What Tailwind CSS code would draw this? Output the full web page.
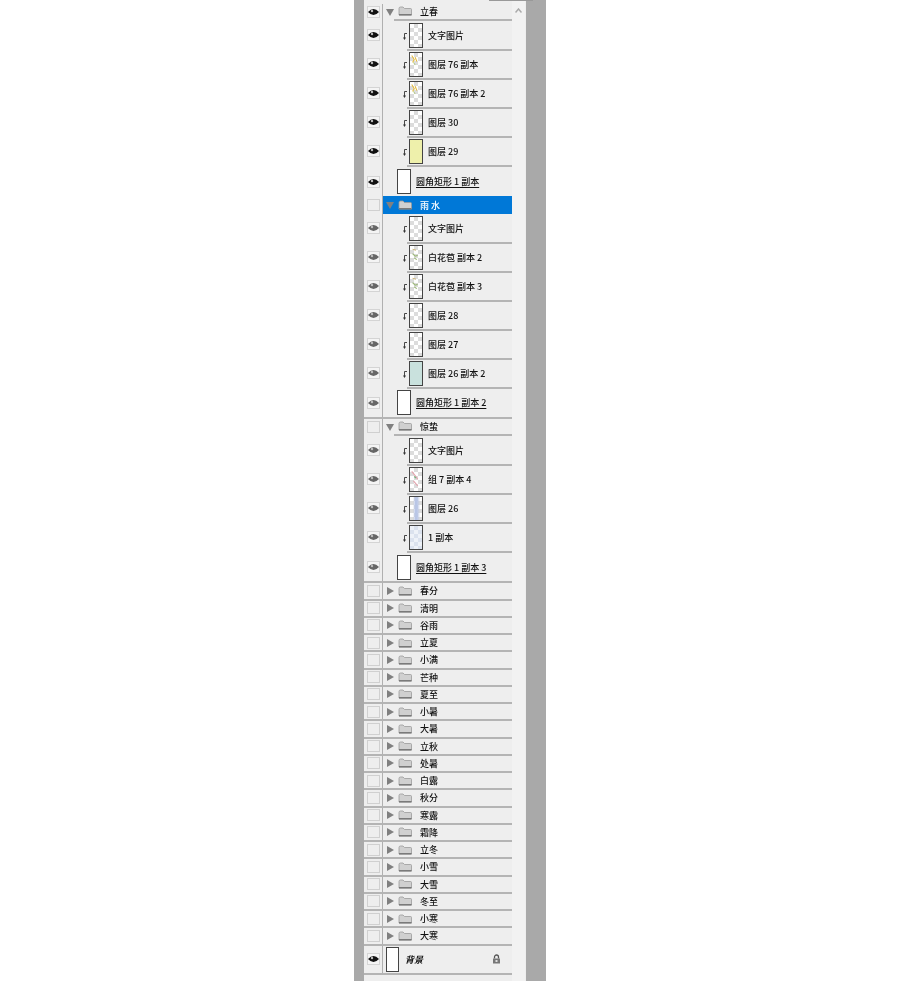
<!DOCTYPE html>
<html lang="zh">
<head>
<meta charset="utf-8">
<script src="https://cdn.jsdelivr.net/npm/@tailwindcss/browser@4"></script>
<title>图层面板</title>
</head>
<body class="bg-white">
<svg class="absolute w-0 h-0">
  <defs>
    <symbol id="eye" viewBox="0 0 11 8"><path d="M0 4Q5.5-2 11 4 5.5 10 0 4Z" fill="currentColor"/><circle cx="4" cy="3" r="1.2" fill="#bbb"/></symbol>
    <symbol id="fold" viewBox="0 0 14 10"><path d="M1 2.5Q1 1 2.5 1H5L6.5 2.5H12.5Q13.5 2.5 13.5 3.5V9H1Z" fill="#d0d0d0" stroke="#9a9a9a" stroke-width="0.8"/><path d="M1 8H13.5V9.5H1Z" fill="#7a7a7a"/></symbol>
    <symbol id="clip" viewBox="0 0 6 9"><path d="M6 1.5H3.5V6" fill="none" stroke="#333" stroke-width="0.9"/><path d="M2 5.5H5L3.5 8Z" fill="#333"/></symbol>
    <symbol id="down" viewBox="0 0 8 8"><path d="M0 1H8L4 8Z" fill="#808080"/></symbol>
    <symbol id="right" viewBox="0 0 7 8"><path d="M0 0L7 4 0 8Z" fill="#808080"/></symbol>
    <symbol id="yel" viewBox="0 0 14 25"><path d="M2 2L5 7 3 10M6 4L8 9" fill="none" stroke="#e3b93a" stroke-width="1.2"/><path d="M4 10L6 13" stroke="#a8c46a"/></symbol>
    <symbol id="grn" viewBox="0 0 14 25"><path d="M3 8L6 11 9 10M5 13L8 15" fill="none" stroke="#9cb878" stroke-width="1.3"/><path d="M3 3L7 4" stroke="#c5a860"/></symbol>
    <symbol id="pnk" viewBox="0 0 14 25"><path d="M2 3L6 8 9 12M4 14L9 20" fill="none" stroke="#e4a3ad" stroke-width="1.3"/><path d="M5 9L7 11" stroke="#6cb47c" stroke-width="1.3"/></symbol>
  </defs>
</svg>
<main class="w-[900px] h-[981px] overflow-hidden">
<div class="ml-[354px] w-[192px] h-[981px] bg-[#a9a9a9] pl-[10px] pr-[20px] blur-[0.4px]">
<div class="relative h-full bg-[#eeeeee] flex text-[9px] leading-none font-medium text-[#111] font-['Noto_Sans_CJK_SC','Noto_Sans',sans-serif]">
<div class="absolute left-[125px] top-0 w-[44px] h-px bg-[#999]"></div>
<div class="w-[148px] pt-[3.6px]">

<div class="flex h-[18.25px]"><div class="w-[19px] pl-px border-r border-[#b0b0b0] flex items-center justify-center pb-px"><span class="w-[13px] h-[12px] bg-[#f4f4f4] border border-[#d4d4d4] flex items-center justify-center text-[#111]"><svg class="w-[11px] h-[8px]"><use href="#eye"/></svg></span></div><div class="flex-1 flex items-start pl-[3px]"><svg class="w-[8px] h-[8px] shrink-0 mt-[4px]"><use href="#down"/></svg><div class="flex-1 h-[17.25px] border-b-2 border-[#b4b4b4] flex items-center pl-[4px]"><svg class="w-[14px] h-[10px]"><use href="#fold"/></svg><span class="ml-[8px]">立春</span></div></div></div>

<div class="flex h-[29.1px]"><div class="w-[19px] pl-px border-r border-[#b0b0b0] flex items-center justify-center pb-[3px]"><span class="w-[13px] h-[12px] bg-[#f4f4f4] border border-[#d4d4d4] flex items-center justify-center text-[#111]"><svg class="w-[11px] h-[8px]"><use href="#eye"/></svg></span></div><div class="flex-1 flex items-center"><svg class="w-[6px] h-[9px] ml-[18px] shrink-0"><use href="#clip"/></svg><div class="flex-1 h-full border-b-2 border-[#b4b4b4] flex items-center pl-[2px]"><div class="w-[14px] h-[25px] border border-[#444] bg-[repeating-conic-gradient(#dcdcdc_0_25%,#ffffff_0_50%)] bg-[length:8px_8px]"></div><span class="ml-[5px]">文字图片</span></div></div></div>
<div class="flex h-[29.1px]"><div class="w-[19px] pl-px border-r border-[#b0b0b0] flex items-center justify-center pb-[3px]"><span class="w-[13px] h-[12px] bg-[#f4f4f4] border border-[#d4d4d4] flex items-center justify-center text-[#111]"><svg class="w-[11px] h-[8px]"><use href="#eye"/></svg></span></div><div class="flex-1 flex items-center"><svg class="w-[6px] h-[9px] ml-[18px] shrink-0"><use href="#clip"/></svg><div class="flex-1 h-full border-b-2 border-[#b4b4b4] flex items-center pl-[2px]"><div class="w-[14px] h-[25px] border border-[#444] bg-[repeating-conic-gradient(#dcdcdc_0_25%,#ffffff_0_50%)] bg-[length:8px_8px]"><svg class="w-full h-full"><use href="#yel"/></svg></div><span class="ml-[5px]">图层 76 副本</span></div></div></div>
<div class="flex h-[29.1px]"><div class="w-[19px] pl-px border-r border-[#b0b0b0] flex items-center justify-center pb-[3px]"><span class="w-[13px] h-[12px] bg-[#f4f4f4] border border-[#d4d4d4] flex items-center justify-center text-[#111]"><svg class="w-[11px] h-[8px]"><use href="#eye"/></svg></span></div><div class="flex-1 flex items-center"><svg class="w-[6px] h-[9px] ml-[18px] shrink-0"><use href="#clip"/></svg><div class="flex-1 h-full border-b-2 border-[#b4b4b4] flex items-center pl-[2px]"><div class="w-[14px] h-[25px] border border-[#444] bg-[repeating-conic-gradient(#dcdcdc_0_25%,#ffffff_0_50%)] bg-[length:8px_8px]"><svg class="w-full h-full"><use href="#yel"/></svg></div><span class="ml-[5px]">图层 76 副本 2</span></div></div></div>
<div class="flex h-[29.1px]"><div class="w-[19px] pl-px border-r border-[#b0b0b0] flex items-center justify-center pb-[3px]"><span class="w-[13px] h-[12px] bg-[#f4f4f4] border border-[#d4d4d4] flex items-center justify-center text-[#111]"><svg class="w-[11px] h-[8px]"><use href="#eye"/></svg></span></div><div class="flex-1 flex items-center"><svg class="w-[6px] h-[9px] ml-[18px] shrink-0"><use href="#clip"/></svg><div class="flex-1 h-full border-b-2 border-[#b4b4b4] flex items-center pl-[2px]"><div class="w-[14px] h-[25px] border border-[#444] bg-[repeating-conic-gradient(#dcdcdc_0_25%,#ffffff_0_50%)] bg-[length:8px_8px]"></div><span class="ml-[5px]">图层 30</span></div></div></div>
<div class="flex h-[29.1px]"><div class="w-[19px] pl-px border-r border-[#b0b0b0] flex items-center justify-center pb-[3px]"><span class="w-[13px] h-[12px] bg-[#f4f4f4] border border-[#d4d4d4] flex items-center justify-center text-[#111]"><svg class="w-[11px] h-[8px]"><use href="#eye"/></svg></span></div><div class="flex-1 flex items-center"><svg class="w-[6px] h-[9px] ml-[18px] shrink-0"><use href="#clip"/></svg><div class="flex-1 h-full border-b-2 border-[#b4b4b4] flex items-center pl-[2px]"><div class="w-[14px] h-[25px] border border-[#444] bg-[#eef0ab]"></div><span class="ml-[5px]">图层 29</span></div></div></div>
<div class="flex h-[29.1px]"><div class="w-[19px] pl-px border-r border-[#b0b0b0] flex items-center justify-center"><span class="w-[13px] h-[12px] bg-[#f4f4f4] border border-[#d4d4d4] flex items-center justify-center text-[#111]"><svg class="w-[11px] h-[8px]"><use href="#eye"/></svg></span></div><div class="flex-1 flex items-center pl-[14px]"><div class="w-[14px] h-[25px] border border-[#444] bg-white"></div><span class="ml-[5px] underline underline-offset-2">圆角矩形 1 副本</span></div></div>

<div class="flex h-[18.25px]"><div class="w-[19px] pl-px border-r border-[#b0b0b0] flex items-center justify-center pb-px"><span class="w-[13px] h-[12px] bg-[#eeeeee] border border-[#d0d0d0]"></span></div><div class="flex-1 h-[17.25px] flex items-center pl-[3px] bg-[#0078d7] text-white"><svg class="w-[8px] h-[8px] shrink-0"><use href="#down"/></svg><div class="flex-1 h-full flex items-center pl-[4px]"><svg class="w-[14px] h-[10px]"><use href="#fold"/></svg><span class="ml-[8px]">雨 水</span></div></div></div>

<div class="flex h-[29.1px]"><div class="w-[19px] pl-px border-r border-[#b0b0b0] flex items-center justify-center pb-[3px]"><span class="w-[13px] h-[12px] bg-[#f4f4f4] border border-[#d4d4d4] flex items-center justify-center text-[#666]"><svg class="w-[11px] h-[8px]"><use href="#eye"/></svg></span></div><div class="flex-1 flex items-center"><svg class="w-[6px] h-[9px] ml-[18px] shrink-0"><use href="#clip"/></svg><div class="flex-1 h-full border-b-2 border-[#b4b4b4] flex items-center pl-[2px]"><div class="w-[14px] h-[25px] border border-[#444] bg-[repeating-conic-gradient(#dcdcdc_0_25%,#ffffff_0_50%)] bg-[length:8px_8px]"></div><span class="ml-[5px]">文字图片</span></div></div></div>
<div class="flex h-[29.1px]"><div class="w-[19px] pl-px border-r border-[#b0b0b0] flex items-center justify-center pb-[3px]"><span class="w-[13px] h-[12px] bg-[#f4f4f4] border border-[#d4d4d4] flex items-center justify-center text-[#666]"><svg class="w-[11px] h-[8px]"><use href="#eye"/></svg></span></div><div class="flex-1 flex items-center"><svg class="w-[6px] h-[9px] ml-[18px] shrink-0"><use href="#clip"/></svg><div class="flex-1 h-full border-b-2 border-[#b4b4b4] flex items-center pl-[2px]"><div class="w-[14px] h-[25px] border border-[#444] bg-[repeating-conic-gradient(#dcdcdc_0_25%,#ffffff_0_50%)] bg-[length:8px_8px]"><svg class="w-full h-full"><use href="#grn"/></svg></div><span class="ml-[5px]">白花苞 副本 2</span></div></div></div>
<div class="flex h-[29.1px]"><div class="w-[19px] pl-px border-r border-[#b0b0b0] flex items-center justify-center pb-[3px]"><span class="w-[13px] h-[12px] bg-[#f4f4f4] border border-[#d4d4d4] flex items-center justify-center text-[#666]"><svg class="w-[11px] h-[8px]"><use href="#eye"/></svg></span></div><div class="flex-1 flex items-center"><svg class="w-[6px] h-[9px] ml-[18px] shrink-0"><use href="#clip"/></svg><div class="flex-1 h-full border-b-2 border-[#b4b4b4] flex items-center pl-[2px]"><div class="w-[14px] h-[25px] border border-[#444] bg-[repeating-conic-gradient(#dcdcdc_0_25%,#ffffff_0_50%)] bg-[length:8px_8px]"><svg class="w-full h-full"><use href="#grn"/></svg></div><span class="ml-[5px]">白花苞 副本 3</span></div></div></div>
<div class="flex h-[29.1px]"><div class="w-[19px] pl-px border-r border-[#b0b0b0] flex items-center justify-center pb-[3px]"><span class="w-[13px] h-[12px] bg-[#f4f4f4] border border-[#d4d4d4] flex items-center justify-center text-[#666]"><svg class="w-[11px] h-[8px]"><use href="#eye"/></svg></span></div><div class="flex-1 flex items-center"><svg class="w-[6px] h-[9px] ml-[18px] shrink-0"><use href="#clip"/></svg><div class="flex-1 h-full border-b-2 border-[#b4b4b4] flex items-center pl-[2px]"><div class="w-[14px] h-[25px] border border-[#444] bg-[repeating-conic-gradient(#dcdcdc_0_25%,#ffffff_0_50%)] bg-[length:8px_8px]"></div><span class="ml-[5px]">图层 28</span></div></div></div>
<div class="flex h-[29.1px]"><div class="w-[19px] pl-px border-r border-[#b0b0b0] flex items-center justify-center pb-[3px]"><span class="w-[13px] h-[12px] bg-[#f4f4f4] border border-[#d4d4d4] flex items-center justify-center text-[#666]"><svg class="w-[11px] h-[8px]"><use href="#eye"/></svg></span></div><div class="flex-1 flex items-center"><svg class="w-[6px] h-[9px] ml-[18px] shrink-0"><use href="#clip"/></svg><div class="flex-1 h-full border-b-2 border-[#b4b4b4] flex items-center pl-[2px]"><div class="w-[14px] h-[25px] border border-[#444] bg-[repeating-conic-gradient(#dcdcdc_0_25%,#ffffff_0_50%)] bg-[length:8px_8px]"></div><span class="ml-[5px]">图层 27</span></div></div></div>
<div class="flex h-[29.1px]"><div class="w-[19px] pl-px border-r border-[#b0b0b0] flex items-center justify-center pb-[3px]"><span class="w-[13px] h-[12px] bg-[#f4f4f4] border border-[#d4d4d4] flex items-center justify-center text-[#666]"><svg class="w-[11px] h-[8px]"><use href="#eye"/></svg></span></div><div class="flex-1 flex items-center"><svg class="w-[6px] h-[9px] ml-[18px] shrink-0"><use href="#clip"/></svg><div class="flex-1 h-full border-b-2 border-[#b4b4b4] flex items-center pl-[2px]"><div class="w-[14px] h-[25px] border border-[#444] bg-[#c9e1dd]"></div><span class="ml-[5px]">图层 26 副本 2</span></div></div></div>
<div class="flex h-[29.5px] border-b-2 border-[#b4b4b4]"><div class="w-[19px] pl-px border-r border-[#b0b0b0] flex items-center justify-center"><span class="w-[13px] h-[12px] bg-[#f4f4f4] border border-[#d4d4d4] flex items-center justify-center text-[#666]"><svg class="w-[11px] h-[8px]"><use href="#eye"/></svg></span></div><div class="flex-1 flex items-center pl-[14px]"><div class="w-[14px] h-[25px] border border-[#444] bg-white"></div><span class="ml-[5px] underline underline-offset-2">圆角矩形 1 副本 2</span></div></div>

<div class="flex h-[18.25px]"><div class="w-[19px] pl-px border-r border-[#b0b0b0] flex items-center justify-center pb-px"><span class="w-[13px] h-[12px] bg-[#eeeeee] border border-[#d0d0d0]"></span></div><div class="flex-1 flex items-start pl-[3px]"><svg class="w-[8px] h-[8px] shrink-0 mt-[4px]"><use href="#down"/></svg><div class="flex-1 h-[17.25px] border-b-2 border-[#b4b4b4] flex items-center pl-[4px]"><svg class="w-[14px] h-[10px]"><use href="#fold"/></svg><span class="ml-[8px]">惊蛰</span></div></div></div>

<div class="flex h-[29.1px]"><div class="w-[19px] pl-px border-r border-[#b0b0b0] flex items-center justify-center pb-[3px]"><span class="w-[13px] h-[12px] bg-[#f4f4f4] border border-[#d4d4d4] flex items-center justify-center text-[#666]"><svg class="w-[11px] h-[8px]"><use href="#eye"/></svg></span></div><div class="flex-1 flex items-center"><svg class="w-[6px] h-[9px] ml-[18px] shrink-0"><use href="#clip"/></svg><div class="flex-1 h-full border-b-2 border-[#b4b4b4] flex items-center pl-[2px]"><div class="w-[14px] h-[25px] border border-[#444] bg-[repeating-conic-gradient(#dcdcdc_0_25%,#ffffff_0_50%)] bg-[length:8px_8px]"></div><span class="ml-[5px]">文字图片</span></div></div></div>
<div class="flex h-[29.1px]"><div class="w-[19px] pl-px border-r border-[#b0b0b0] flex items-center justify-center pb-[3px]"><span class="w-[13px] h-[12px] bg-[#f4f4f4] border border-[#d4d4d4] flex items-center justify-center text-[#666]"><svg class="w-[11px] h-[8px]"><use href="#eye"/></svg></span></div><div class="flex-1 flex items-center"><svg class="w-[6px] h-[9px] ml-[18px] shrink-0"><use href="#clip"/></svg><div class="flex-1 h-full border-b-2 border-[#b4b4b4] flex items-center pl-[2px]"><div class="w-[14px] h-[25px] border border-[#444] bg-[repeating-conic-gradient(#dcdcdc_0_25%,#ffffff_0_50%)] bg-[length:8px_8px]"><svg class="w-full h-full"><use href="#pnk"/></svg></div><span class="ml-[5px]">组 7 副本 4</span></div></div></div>
<div class="flex h-[29.1px]"><div class="w-[19px] pl-px border-r border-[#b0b0b0] flex items-center justify-center pb-[3px]"><span class="w-[13px] h-[12px] bg-[#f4f4f4] border border-[#d4d4d4] flex items-center justify-center text-[#666]"><svg class="w-[11px] h-[8px]"><use href="#eye"/></svg></span></div><div class="flex-1 flex items-center"><svg class="w-[6px] h-[9px] ml-[18px] shrink-0"><use href="#clip"/></svg><div class="flex-1 h-full border-b-2 border-[#b4b4b4] flex items-center pl-[2px]"><div class="w-[14px] h-[25px] border border-[#444] bg-[linear-gradient(90deg,#ffffff00_25%,#b9c6e6_45%,#b9c6e6_60%,#ffffff00_85%),repeating-conic-gradient(#dcdcdc_0_25%,#ffffff_0_50%)] bg-[length:100%_100%,8px_8px]"></div><span class="ml-[5px]">图层 26</span></div></div></div>
<div class="flex h-[29.1px]"><div class="w-[19px] pl-px border-r border-[#b0b0b0] flex items-center justify-center pb-[3px]"><span class="w-[13px] h-[12px] bg-[#f4f4f4] border border-[#d4d4d4] flex items-center justify-center text-[#666]"><svg class="w-[11px] h-[8px]"><use href="#eye"/></svg></span></div><div class="flex-1 flex items-center"><svg class="w-[6px] h-[9px] ml-[18px] shrink-0"><use href="#clip"/></svg><div class="flex-1 h-full border-b-2 border-[#b4b4b4] flex items-center pl-[2px]"><div class="w-[14px] h-[25px] border border-[#444] bg-[repeating-conic-gradient(#dbe2ee_0_25%,#eef2f8_0_50%)] bg-[length:8px_8px]"></div><span class="ml-[5px]">1 副本</span></div></div></div>
<div class="flex h-[30px] border-b-2 border-[#b4b4b4]"><div class="w-[19px] pl-px border-r border-[#b0b0b0] flex items-center justify-center"><span class="w-[13px] h-[12px] bg-[#f4f4f4] border border-[#d4d4d4] flex items-center justify-center text-[#666]"><svg class="w-[11px] h-[8px]"><use href="#eye"/></svg></span></div><div class="flex-1 flex items-center pl-[14px]"><div class="w-[14px] h-[25px] border border-[#444] bg-white"></div><span class="ml-[5px] underline underline-offset-2">圆角矩形 1 副本 3</span></div></div>

<div class="flex h-[17.25px] border-b-2 border-[#b4b4b4]"><div class="w-[19px] pl-px border-r border-[#b0b0b0] flex items-center justify-center"><span class="w-[13px] h-[12px] bg-[#eeeeee] border border-[#d0d0d0]"></span></div><div class="flex-1 flex items-center pl-[4px]"><svg class="w-[7px] h-[8px] shrink-0"><use href="#right"/></svg><svg class="w-[14px] h-[10px] ml-[4px]"><use href="#fold"/></svg><span class="ml-[8px]">春分</span></div></div>
<div class="flex h-[17.25px] border-b-2 border-[#b4b4b4]"><div class="w-[19px] pl-px border-r border-[#b0b0b0] flex items-center justify-center"><span class="w-[13px] h-[12px] bg-[#eeeeee] border border-[#d0d0d0]"></span></div><div class="flex-1 flex items-center pl-[4px]"><svg class="w-[7px] h-[8px] shrink-0"><use href="#right"/></svg><svg class="w-[14px] h-[10px] ml-[4px]"><use href="#fold"/></svg><span class="ml-[8px]">清明</span></div></div>
<div class="flex h-[17.25px] border-b-2 border-[#b4b4b4]"><div class="w-[19px] pl-px border-r border-[#b0b0b0] flex items-center justify-center"><span class="w-[13px] h-[12px] bg-[#eeeeee] border border-[#d0d0d0]"></span></div><div class="flex-1 flex items-center pl-[4px]"><svg class="w-[7px] h-[8px] shrink-0"><use href="#right"/></svg><svg class="w-[14px] h-[10px] ml-[4px]"><use href="#fold"/></svg><span class="ml-[8px]">谷雨</span></div></div>
<div class="flex h-[17.25px] border-b-2 border-[#b4b4b4]"><div class="w-[19px] pl-px border-r border-[#b0b0b0] flex items-center justify-center"><span class="w-[13px] h-[12px] bg-[#eeeeee] border border-[#d0d0d0]"></span></div><div class="flex-1 flex items-center pl-[4px]"><svg class="w-[7px] h-[8px] shrink-0"><use href="#right"/></svg><svg class="w-[14px] h-[10px] ml-[4px]"><use href="#fold"/></svg><span class="ml-[8px]">立夏</span></div></div>
<div class="flex h-[17.25px] border-b-2 border-[#b4b4b4]"><div class="w-[19px] pl-px border-r border-[#b0b0b0] flex items-center justify-center"><span class="w-[13px] h-[12px] bg-[#eeeeee] border border-[#d0d0d0]"></span></div><div class="flex-1 flex items-center pl-[4px]"><svg class="w-[7px] h-[8px] shrink-0"><use href="#right"/></svg><svg class="w-[14px] h-[10px] ml-[4px]"><use href="#fold"/></svg><span class="ml-[8px]">小满</span></div></div>
<div class="flex h-[17.25px] border-b-2 border-[#b4b4b4]"><div class="w-[19px] pl-px border-r border-[#b0b0b0] flex items-center justify-center"><span class="w-[13px] h-[12px] bg-[#eeeeee] border border-[#d0d0d0]"></span></div><div class="flex-1 flex items-center pl-[4px]"><svg class="w-[7px] h-[8px] shrink-0"><use href="#right"/></svg><svg class="w-[14px] h-[10px] ml-[4px]"><use href="#fold"/></svg><span class="ml-[8px]">芒种</span></div></div>
<div class="flex h-[17.25px] border-b-2 border-[#b4b4b4]"><div class="w-[19px] pl-px border-r border-[#b0b0b0] flex items-center justify-center"><span class="w-[13px] h-[12px] bg-[#eeeeee] border border-[#d0d0d0]"></span></div><div class="flex-1 flex items-center pl-[4px]"><svg class="w-[7px] h-[8px] shrink-0"><use href="#right"/></svg><svg class="w-[14px] h-[10px] ml-[4px]"><use href="#fold"/></svg><span class="ml-[8px]">夏至</span></div></div>
<div class="flex h-[17.25px] border-b-2 border-[#b4b4b4]"><div class="w-[19px] pl-px border-r border-[#b0b0b0] flex items-center justify-center"><span class="w-[13px] h-[12px] bg-[#eeeeee] border border-[#d0d0d0]"></span></div><div class="flex-1 flex items-center pl-[4px]"><svg class="w-[7px] h-[8px] shrink-0"><use href="#right"/></svg><svg class="w-[14px] h-[10px] ml-[4px]"><use href="#fold"/></svg><span class="ml-[8px]">小暑</span></div></div>
<div class="flex h-[17.25px] border-b-2 border-[#b4b4b4]"><div class="w-[19px] pl-px border-r border-[#b0b0b0] flex items-center justify-center"><span class="w-[13px] h-[12px] bg-[#eeeeee] border border-[#d0d0d0]"></span></div><div class="flex-1 flex items-center pl-[4px]"><svg class="w-[7px] h-[8px] shrink-0"><use href="#right"/></svg><svg class="w-[14px] h-[10px] ml-[4px]"><use href="#fold"/></svg><span class="ml-[8px]">大暑</span></div></div>
<div class="flex h-[17.25px] border-b-2 border-[#b4b4b4]"><div class="w-[19px] pl-px border-r border-[#b0b0b0] flex items-center justify-center"><span class="w-[13px] h-[12px] bg-[#eeeeee] border border-[#d0d0d0]"></span></div><div class="flex-1 flex items-center pl-[4px]"><svg class="w-[7px] h-[8px] shrink-0"><use href="#right"/></svg><svg class="w-[14px] h-[10px] ml-[4px]"><use href="#fold"/></svg><span class="ml-[8px]">立秋</span></div></div>
<div class="flex h-[17.25px] border-b-2 border-[#b4b4b4]"><div class="w-[19px] pl-px border-r border-[#b0b0b0] flex items-center justify-center"><span class="w-[13px] h-[12px] bg-[#eeeeee] border border-[#d0d0d0]"></span></div><div class="flex-1 flex items-center pl-[4px]"><svg class="w-[7px] h-[8px] shrink-0"><use href="#right"/></svg><svg class="w-[14px] h-[10px] ml-[4px]"><use href="#fold"/></svg><span class="ml-[8px]">处暑</span></div></div>
<div class="flex h-[17.25px] border-b-2 border-[#b4b4b4]"><div class="w-[19px] pl-px border-r border-[#b0b0b0] flex items-center justify-center"><span class="w-[13px] h-[12px] bg-[#eeeeee] border border-[#d0d0d0]"></span></div><div class="flex-1 flex items-center pl-[4px]"><svg class="w-[7px] h-[8px] shrink-0"><use href="#right"/></svg><svg class="w-[14px] h-[10px] ml-[4px]"><use href="#fold"/></svg><span class="ml-[8px]">白露</span></div></div>
<div class="flex h-[17.25px] border-b-2 border-[#b4b4b4]"><div class="w-[19px] pl-px border-r border-[#b0b0b0] flex items-center justify-center"><span class="w-[13px] h-[12px] bg-[#eeeeee] border border-[#d0d0d0]"></span></div><div class="flex-1 flex items-center pl-[4px]"><svg class="w-[7px] h-[8px] shrink-0"><use href="#right"/></svg><svg class="w-[14px] h-[10px] ml-[4px]"><use href="#fold"/></svg><span class="ml-[8px]">秋分</span></div></div>
<div class="flex h-[17.25px] border-b-2 border-[#b4b4b4]"><div class="w-[19px] pl-px border-r border-[#b0b0b0] flex items-center justify-center"><span class="w-[13px] h-[12px] bg-[#eeeeee] border border-[#d0d0d0]"></span></div><div class="flex-1 flex items-center pl-[4px]"><svg class="w-[7px] h-[8px] shrink-0"><use href="#right"/></svg><svg class="w-[14px] h-[10px] ml-[4px]"><use href="#fold"/></svg><span class="ml-[8px]">寒露</span></div></div>
<div class="flex h-[17.25px] border-b-2 border-[#b4b4b4]"><div class="w-[19px] pl-px border-r border-[#b0b0b0] flex items-center justify-center"><span class="w-[13px] h-[12px] bg-[#eeeeee] border border-[#d0d0d0]"></span></div><div class="flex-1 flex items-center pl-[4px]"><svg class="w-[7px] h-[8px] shrink-0"><use href="#right"/></svg><svg class="w-[14px] h-[10px] ml-[4px]"><use href="#fold"/></svg><span class="ml-[8px]">霜降</span></div></div>
<div class="flex h-[17.25px] border-b-2 border-[#b4b4b4]"><div class="w-[19px] pl-px border-r border-[#b0b0b0] flex items-center justify-center"><span class="w-[13px] h-[12px] bg-[#eeeeee] border border-[#d0d0d0]"></span></div><div class="flex-1 flex items-center pl-[4px]"><svg class="w-[7px] h-[8px] shrink-0"><use href="#right"/></svg><svg class="w-[14px] h-[10px] ml-[4px]"><use href="#fold"/></svg><span class="ml-[8px]">立冬</span></div></div>
<div class="flex h-[17.25px] border-b-2 border-[#b4b4b4]"><div class="w-[19px] pl-px border-r border-[#b0b0b0] flex items-center justify-center"><span class="w-[13px] h-[12px] bg-[#eeeeee] border border-[#d0d0d0]"></span></div><div class="flex-1 flex items-center pl-[4px]"><svg class="w-[7px] h-[8px] shrink-0"><use href="#right"/></svg><svg class="w-[14px] h-[10px] ml-[4px]"><use href="#fold"/></svg><span class="ml-[8px]">小雪</span></div></div>
<div class="flex h-[17.25px] border-b-2 border-[#b4b4b4]"><div class="w-[19px] pl-px border-r border-[#b0b0b0] flex items-center justify-center"><span class="w-[13px] h-[12px] bg-[#eeeeee] border border-[#d0d0d0]"></span></div><div class="flex-1 flex items-center pl-[4px]"><svg class="w-[7px] h-[8px] shrink-0"><use href="#right"/></svg><svg class="w-[14px] h-[10px] ml-[4px]"><use href="#fold"/></svg><span class="ml-[8px]">大雪</span></div></div>
<div class="flex h-[17.25px] border-b-2 border-[#b4b4b4]"><div class="w-[19px] pl-px border-r border-[#b0b0b0] flex items-center justify-center"><span class="w-[13px] h-[12px] bg-[#eeeeee] border border-[#d0d0d0]"></span></div><div class="flex-1 flex items-center pl-[4px]"><svg class="w-[7px] h-[8px] shrink-0"><use href="#right"/></svg><svg class="w-[14px] h-[10px] ml-[4px]"><use href="#fold"/></svg><span class="ml-[8px]">冬至</span></div></div>
<div class="flex h-[17.25px] border-b-2 border-[#b4b4b4]"><div class="w-[19px] pl-px border-r border-[#b0b0b0] flex items-center justify-center"><span class="w-[13px] h-[12px] bg-[#eeeeee] border border-[#d0d0d0]"></span></div><div class="flex-1 flex items-center pl-[4px]"><svg class="w-[7px] h-[8px] shrink-0"><use href="#right"/></svg><svg class="w-[14px] h-[10px] ml-[4px]"><use href="#fold"/></svg><span class="ml-[8px]">小寒</span></div></div>
<div class="flex h-[17.25px] border-b-2 border-[#b4b4b4]"><div class="w-[19px] pl-px border-r border-[#b0b0b0] flex items-center justify-center"><span class="w-[13px] h-[12px] bg-[#eeeeee] border border-[#d0d0d0]"></span></div><div class="flex-1 flex items-center pl-[4px]"><svg class="w-[7px] h-[8px] shrink-0"><use href="#right"/></svg><svg class="w-[14px] h-[10px] ml-[4px]"><use href="#fold"/></svg><span class="ml-[8px]">大寒</span></div></div>

<div class="flex h-[29px] border-b-2 border-[#b4b4b4]"><div class="w-[19px] pl-px border-r border-[#b0b0b0] flex items-center justify-center"><span class="w-[13px] h-[12px] bg-[#f4f4f4] border border-[#d4d4d4] flex items-center justify-center text-[#111]"><svg class="w-[11px] h-[8px]"><use href="#eye"/></svg></span></div><div class="flex-1 flex items-center pl-[3px] pr-[11px]"><div class="w-[13px] h-[25px] border border-[#444] bg-white"></div><span class="ml-[6px] italic font-bold">背景</span><svg class="w-[9px] h-[10px] ml-auto" viewBox="0 0 9 10"><path d="M2.5 4.5V3A2 2 0 0 1 6.5 3V4.5" fill="none" stroke="#555" stroke-width="1.3"/><path d="M1 4.5H8V9.5H1Z" fill="#777"/><path d="M3.5 6H5.5V8H3.5Z" fill="#ddd"/></svg></div></div>
</div>
<div class="w-[13px] bg-[#f2f2f2] flex justify-center pt-[8px]"><svg class="w-[7px] h-[5px]" viewBox="0 0 7 5"><path d="M0.5 4.5L3.5 1 6.5 4.5" fill="none" stroke="#aaa" stroke-width="1.5"/></svg></div>
</div>
</div>
</main>
</body>
</html>
